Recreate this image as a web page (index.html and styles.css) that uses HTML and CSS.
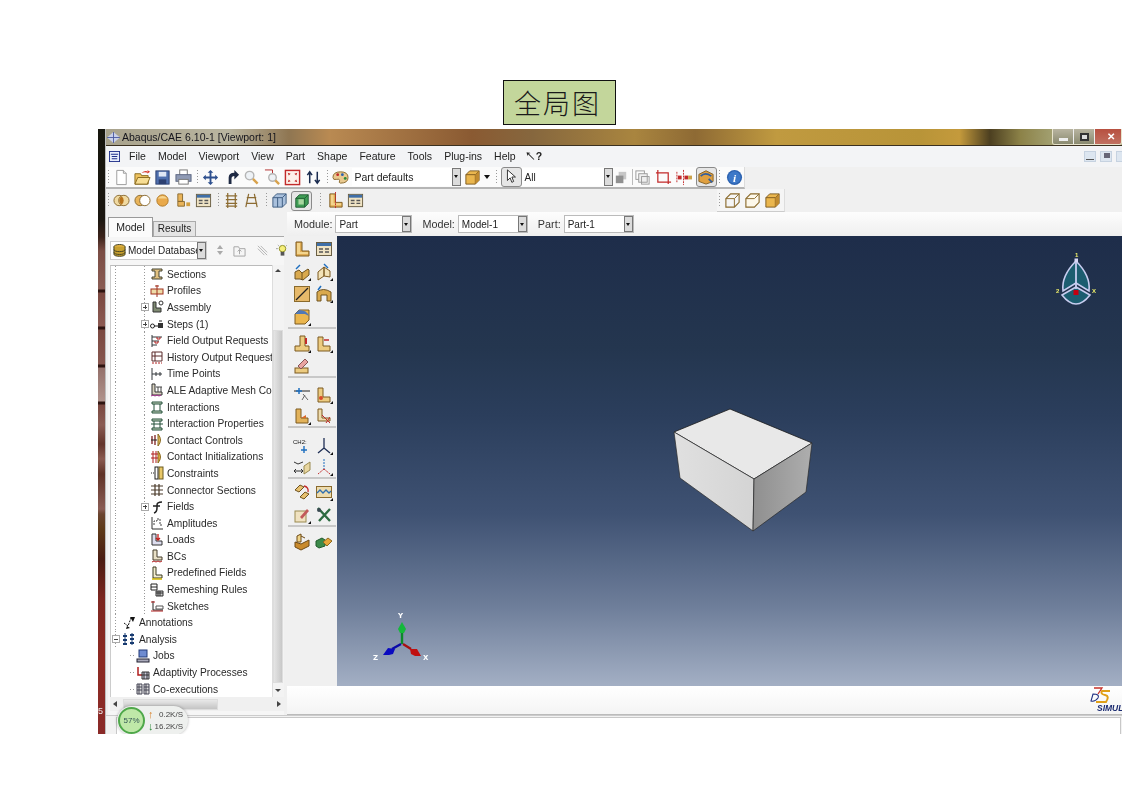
FILE: index.html
```html
<!DOCTYPE html>
<html lang="zh">
<head>
<meta charset="utf-8">
<title>全局图</title>
<link rel="stylesheet" href="styles.css">
</head>
<body>
<svg class="defs" width="0" height="0" aria-hidden="true">
  <symbol id="lshape" viewBox="0 0 18 18"><path d="M3 2h6v9h7v5H3z" fill="#e0ad55" stroke="#7d5a20"/><path d="M4 3h3v9h8v2H4z" fill="#f3d58e"/></symbol>
  <symbol id="win" viewBox="0 0 18 18"><rect x="1.500" y="2.500" width="15" height="13" fill="#efe3c4" stroke="#6a5f44"/><rect x="2" y="3" width="14" height="3" fill="#3f6fa8"/><path d="M4 9h4M10 9h4M4 12h4M10 12h4" stroke="#555" stroke-width="1.500"/></symbol>
  <symbol id="cube" viewBox="0 0 18 18"><path d="M2 6l4-4h10v10l-4 4H2z" fill="#eab64e" stroke="#7d5a20"/><path d="M2 6h10v10M12 6l4-4" fill="none" stroke="#7d5a20"/><path d="M12 6l4-4v10l-4 4z" fill="#c08a2e"/></symbol>
  <symbol id="cubeo" viewBox="0 0 18 18"><path d="M2 7l5-5h9v9l-5 5H2z" fill="none" stroke="#8a6a2c" stroke-width="1.200"/><path d="M2 7h9v9M11 7l5-5" fill="none" stroke="#8a6a2c"/></symbol>
  <symbol id="cubew" viewBox="0 0 18 18"><path d="M2 7l5-5h9v9l-5 5H2z" fill="#fdf8ea" stroke="#8a6a2c" stroke-width="1.200"/><path d="M2 7h9l5-5" fill="none" stroke="#8a6a2c"/></symbol>
  <symbol id="wedge" viewBox="0 0 18 18"><path d="M2 9l4-2 3 3 6-4 1 1v5l-6 5-3-1-5 0z" fill="#d9a94e" stroke="#6e521f"/><path d="M9 10v7" stroke="#6e521f" fill="none"/><path d="M3 6l4-4" stroke="#1f6fbf" stroke-width="1.500"/></symbol>
  <symbol id="frame" viewBox="0 0 14 14"><path d="M2 2h10v2H2zM4 4v7M10 4v7M2 11h10v2H2z" fill="#c9d7c2" stroke="#24513a"/></symbol>
  <symbol id="lsm" viewBox="0 0 14 14"><path d="M3 1h4v7h5v3H3z" fill="#e9e0c6" stroke="#443d2b"/><path d="M2 13l2-1 2 1 2-1 2 1 2-1" fill="none" stroke="#b01e1e"/></symbol>
  <symbol id="bars" viewBox="0 0 14 14"><path d="M2 1v12M2 3h10M2 7h7M2 11h5" stroke="#33363b" fill="none"/><path d="M7 3v2h3V3M5 7v2h3V7" stroke="#b01e1e" fill="none"/></symbol>
  <symbol id="fly" viewBox="0 0 18 18"><path d="M18 18h-3l3-3z" fill="#111"/></symbol>
</svg>

<div class="page">
  <h1 class="tag">全局图</h1>

  <div class="window">
    <div class="strip"><span class="strip-digit">5</span></div>
    <div class="app">

      <div class="titlebar">
        <svg class="ti" viewBox="0 0 14 12"><path d="M0 6l7-6 7 6-7 6z" fill="#c9d0ea"/><path d="M0 6h14M7 0v12" stroke="#4a5aa0"/></svg>
        <span class="title-text">Abaqus/CAE 6.10-1 [Viewport: 1]</span>
        <div class="caption">
          <span class="cap"><i class="cap-min"></i></span>
          <span class="cap"><i class="cap-max"></i></span>
          <span class="cap cap-close">✕</span>
        </div>
      </div>

      <div class="menubar">
        <svg class="mi" viewBox="0 0 12 12"><rect x=".5" y=".5" width="11" height="11" fill="#e8eefc" stroke="#1f2f8a"/><path d="M2 3.500h8M3 6h6M3 8.500h6" stroke="#1f2f8a" stroke-width="1.200"/></svg>
        <nav class="menu">
          <span>File</span><span>Model</span><span>Viewport</span><span>View</span><span>Part</span><span>Shape</span><span>Feature</span><span>Tools</span><span>Plug-ins</span><span>Help</span><span class="q">↖?</span>
        </nav>
        <div class="mdi">
          <i class="mdi-btn"><b class="m1"></b></i><i class="mdi-btn"><b class="m2"></b></i><i class="mdi-btn"></i>
        </div>
      </div>

      <div class="toolbar tb1">
        <span class="grip"></span>
        <svg class="ic" viewBox="0 0 18 18"><path d="M4 1.500h7l3 3v12H4z" fill="#fff" stroke="#9a9a9a"/><path d="M11 1.500v3h3" fill="#eee" stroke="#9a9a9a"/></svg>
        <svg class="ic" viewBox="0 0 18 18"><path d="M1 5h6l1 2h7v9H1z" fill="#eec25e" stroke="#8a6a20"/><path d="M1 16l3-7h13l-3 7z" fill="#f7dd94" stroke="#8a6a20"/><path d="M8 4q4-3 7-1l-1-2 3 2-3 2 .5-1q-3-1-6 0" fill="#d8362a"/></svg>
        <svg class="ic" viewBox="0 0 18 18"><rect x="2" y="2" width="14" height="14" fill="#4f6fae" stroke="#2c3f70"/><rect x="5" y="3" width="8" height="5" fill="#dfe7f5"/><rect x="5" y="11" width="8" height="5" fill="#2c3f70"/></svg>
        <svg class="ic" viewBox="0 0 18 18"><rect x="5" y="1" width="8" height="6" fill="#fff" stroke="#777"/><rect x="1" y="6" width="16" height="7" fill="#8f9ab4" stroke="#5a6480"/><rect x="4" y="11" width="10" height="5" fill="#fff" stroke="#777"/></svg>
        <span class="grip"></span>
        <svg class="ic" viewBox="0 0 18 18"><path d="M9 1l3 3h-2v4h4V6l3 3-3 3v-2h-4v4h2l-3 3-3-3h2v-4H4v2L1 9l3-3v2h4V4H6z" fill="#2d4f8e"/></svg>
        <svg class="ic" viewBox="0 0 18 18"><path d="M6 16V9q0-5 6-5V1l5 5-5 5V7.500q-3 0-3 3V16z" fill="#1f2a44"/></svg>
        <svg class="ic" viewBox="0 0 18 18"><circle cx="7" cy="7" r="4.500" fill="#eef2f6" stroke="#b5b5b5" stroke-width="1.500"/><path d="M10.500 10.500l5 5" stroke="#d8a24c" stroke-width="2.500"/></svg>
        <svg class="ic" viewBox="0 0 18 18"><path d="M1 1h8v4" fill="none" stroke="#b02a2a"/><circle cx="9" cy="9" r="4" fill="#eef2f6" stroke="#b5b5b5" stroke-width="1.500"/><path d="M12 12l4 4" stroke="#d8a24c" stroke-width="2.500"/></svg>
        <svg class="ic" viewBox="0 0 18 18"><rect x="1.500" y="1.500" width="15" height="15" fill="#fdf1ea" stroke="#c22a2a" stroke-width="1.500"/><path d="M4 4l3 1-2 2zM14 4l-3 1 2 2zM4 14l3-1-2-2zM14 14l-3-1 2-2z" fill="#c22a2a"/></svg>
        <svg class="ic" viewBox="0 0 18 18"><path d="M5 15V4M2.500 6.500L5 3l2.500 3.500M13 3v11M10.500 11.500L13 15l2.500-3.500" fill="none" stroke="#1b2c50" stroke-width="1.600"/></svg>
        <span class="grip"></span>
        <svg class="ic" viewBox="0 0 18 18"><path d="M1 9q0-6 8-6t8 6q0 6-8 6-2 0-1-3 0-2-3-1-4 1-4-2z" fill="#e9c98f" stroke="#8a6a30"/><circle cx="6" cy="6" r="1.500" fill="#c22a2a"/><circle cx="11" cy="6" r="1.500" fill="#2c62b0"/><circle cx="14" cy="10" r="1.500" fill="#2c8a3a"/></svg>
        <span class="combo c-defaults"><span>Part defaults</span><i class="arrow"></i></span>
        <svg class="ic ic-cube" viewBox="0 0 18 18"><use href="#cube"/></svg>
        <i class="drop"></i>
        <span class="grip"></span>
        <span class="pressed"><svg class="ic" viewBox="0 0 18 18"><path d="M5 1v12l3-3 2 5 2-1-2-5h4z" fill="#fff" stroke="#222"/></svg></span>
        <span class="combo c-all"><span>All</span><i class="arrow"></i></span>
        <svg class="ic dim" viewBox="0 0 18 18"><rect x="6" y="3" width="8" height="8" fill="#bbb"/><rect x="3" y="7" width="8" height="8" fill="#777"/></svg>
        <span class="sep"></span>
        <svg class="ic faint" viewBox="0 0 18 18"><rect x="2" y="2" width="9" height="9" fill="none" stroke="#888"/><rect x="5" y="5" width="9" height="9" fill="#eee" stroke="#888"/><rect x="8" y="8" width="8" height="8" fill="none" stroke="#888"/></svg>
        <svg class="ic" viewBox="0 0 18 18"><path d="M3 1v13h14M1 4h13v12" fill="none" stroke="#c22a2a" stroke-width="1.300"/></svg>
        <svg class="ic" viewBox="0 0 18 18"><path d="M2 3v12M9 1v16" stroke="#c22a2a" stroke-dasharray="2 1"/><rect x="3" y="7" width="4" height="4" fill="#c22a2a"/><rect x="10" y="7" width="4" height="4" fill="#c22a2a"/><rect x="14" y="7" width="4" height="4" fill="#caa24a"/></svg>
        <span class="pressed"><svg class="ic" viewBox="0 0 18 18"><path d="M1 6l8-4 8 4v8l-8 3-8-3z" fill="#e0a040" stroke="#7d5a20"/><path d="M3 8q5-5 12 0" stroke="#335f9e" fill="none" stroke-width="2"/><path d="M12 11l4 4" stroke="#335f9e" stroke-width="2"/></svg></span>
        <span class="grip"></span>
        <svg class="ic ic-info" viewBox="0 0 18 18"><circle cx="9" cy="9" r="8" fill="#2c62b0"/><circle cx="9" cy="9" r="6.500" fill="#3d78c8"/><text class="info" x="9" y="14" text-anchor="middle">i</text></svg>
      </div>

      <div class="toolbar tb2">
        <span class="grip"></span>
        <svg class="ic" viewBox="0 0 18 18"><circle cx="6.500" cy="9" r="5.500" fill="#f0d9a0" stroke="#8a6a30"/><circle cx="11.500" cy="9" r="5.500" fill="#f0d9a0" stroke="#8a6a30"/><path d="M9 4.500a5.500 5.500 0 010 9 5.500 5.500 0 010-9" fill="#b8741c"/></svg>
        <svg class="ic" viewBox="0 0 18 18"><circle cx="6.500" cy="9" r="5.500" fill="#e9b45a" stroke="#8a6a30"/><circle cx="11.500" cy="9" r="5.500" fill="#fff" stroke="#8a6a30"/></svg>
        <svg class="ic" viewBox="0 0 18 18"><circle cx="9" cy="9" r="6" fill="#e9a94a" stroke="#b07a28"/><path d="M4 7a6 6 0 0110 0" fill="#f6d48e"/></svg>
        <svg class="ic" viewBox="0 0 18 18"><path d="M3 2h5v8h-5zM3 10h7v5H3z" fill="#e9b45a" stroke="#8a6a30"/><rect x="12" y="11" width="4" height="4" fill="#d3a040"/></svg>
        <svg class="ic" viewBox="0 0 18 18"><use href="#win"/></svg>
        <span class="grip g-mid"></span>
        <svg class="ic" viewBox="0 0 18 18"><path d="M5 1v16M13 1v16M3 4h12M3 8h12M3 12h12M3 15h12" stroke="#8c6c33" stroke-width="1.300"/></svg>
        <svg class="ic" viewBox="0 0 18 18"><path d="M6 2L3 16M12 2l3 14M4 6h10M3 12h12" stroke="#8c6c33" stroke-width="1.300" fill="none"/></svg>
        <span class="grip g-mid"></span>
        <svg class="ic" viewBox="0 0 18 18"><path d="M2 6l4-4h10v10l-4 4H2z" fill="#a9c0dc" stroke="#3b5a80"/><path d="M2 6h10v10M12 6l4-4M7 6v10" fill="none" stroke="#3b5a80"/></svg>
        <span class="pressed"><svg class="ic" viewBox="0 0 18 18"><path d="M2 6l4-4h10v10l-4 4H2z" fill="#3f9d55" stroke="#1e5a30"/><path d="M5 7h6v6H5z" fill="#a9d7a0"/><path d="M2 6h10v10M12 6l4-4" fill="none" stroke="#1e5a30"/></svg></span>
        <span class="grip g-wide"></span>
        <svg class="ic" viewBox="0 0 18 18"><use href="#lshape"/><path d="M9 0v18" stroke="#c22a2a" stroke-dasharray="2 1"/></svg>
        <svg class="ic" viewBox="0 0 18 18"><use href="#win"/></svg>
        <div class="tb2-right">
          <span class="grip"></span>
          <svg class="ic" viewBox="0 0 18 18"><use href="#cubeo"/></svg>
          <svg class="ic" viewBox="0 0 18 18"><use href="#cubew"/></svg>
          <svg class="ic" viewBox="0 0 18 18"><use href="#cube"/></svg>
        </div>
      </div>

      <div class="main">
        <aside class="left">
          <div class="tabs">
            <span class="tab tab-on">Model</span>
            <span class="tab">Results</span>
          </div>
          <div class="panel">
            <div class="dbrow">
              <span class="combo c-db">
                <svg class="ic-s" viewBox="0 0 14 14"><ellipse cx="7" cy="3" rx="6" ry="2.500" fill="#e0b040" stroke="#3c3c20"/><path d="M1 3v8c0 3 12 3 12 0V3" fill="#c8a030" stroke="#3c3c20"/><path d="M1 6c0 3 12 3 12 0M1 9c0 3 12 3 12 0" fill="none" stroke="#3c3c20"/></svg>
                <span class="clip">Model Database</span><i class="arrow"></i>
              </span>
              <span class="updown">
                <i class="up"></i><i class="down"></i>
              </span>
              <svg class="ic-s dimmer" viewBox="0 0 14 14"><path d="M1 3h5l1 2h6v8H1z" fill="none" stroke="#999"/><path d="M7 6v5M5 8l2-2 2 2" fill="none" stroke="#999"/></svg>
              <svg class="ic-s dimmer" viewBox="0 0 14 14"><path d="M2 2l10 10M5 2l7 7M2 5l7 7" stroke="#aaa" fill="none"/></svg>
              <svg class="ic-s" viewBox="0 0 14 14"><circle cx="7" cy="5" r="3.500" fill="#f6ef7a" stroke="#8a8a20"/><rect x="5" y="8.500" width="4" height="4" fill="#555"/><path d="M0 5h2M12 5h2M2 1l1 1M12 1l-1 1" stroke="#999"/></svg>
            </div>

            <div class="treewrap">
              <div class="tree">
                <div class="row l2"><svg class="ti2" viewBox="0 0 14 14"><path d="M2 2h10v2H9v6h3v2H2v-2h3V4H2z" fill="#e0c080" stroke="#443"/></svg><span>Sections</span></div>
                <div class="row l2"><svg class="ti2" viewBox="0 0 14 14"><rect x="1" y="5" width="12" height="5" fill="#eedca8" stroke="#a0301e"/><path d="M7 1v12M5 2h4" stroke="#a0301e"/></svg><span>Profiles</span></div>
                <div class="row l2"><i class="exp plus"></i><svg class="ti2" viewBox="0 0 14 14"><path d="M3 2h3v6h5v4H3z" fill="#7f8a72" stroke="#333"/><circle cx="11" cy="3" r="2" fill="#fff" stroke="#333"/></svg><span>Assembly</span></div>
                <div class="row l2"><i class="exp plus"></i><svg class="ti2" viewBox="0 0 14 14"><circle cx="2.500" cy="9" r="2" fill="#fff" stroke="#222"/><path d="M4 9h4" stroke="#222"/><rect x="8" y="6" width="5" height="5" fill="#333"/><path d="M9 4h3" stroke="#222"/></svg><span>Steps (1)</span></div>
                <div class="row l2"><svg class="ti2" viewBox="0 0 14 14"><use href="#bars"/></svg><span>Field Output Requests</span></div>
                <div class="row l2"><svg class="ti2" viewBox="0 0 14 14"><path d="M2 2h10v9H2zM5 2v9M2 6h10" fill="none" stroke="#5a2a2a"/><path d="M2 13h10" stroke="#b01e1e" stroke-dasharray="2 1"/></svg><span>History Output Requests</span></div>
                <div class="row l2"><svg class="ti2" viewBox="0 0 14 14"><path d="M2 1v12M2 7h10M6 5v4M10 5v4" fill="none" stroke="#33363b"/></svg><span>Time Points</span></div>
                <div class="row l2"><svg class="ti2" viewBox="0 0 14 14"><path d="M2 1h3v8h7v3H2z" fill="#d8d2c0" stroke="#333"/><path d="M6 4h6M8 4v5M11 4v5" stroke="#444"/><path d="M1 13l2-1 2 1 2-1 2 1 2-1" fill="none" stroke="#a02a8a"/></svg><span>ALE Adaptive Mesh Controls</span></div>
                <div class="row l2"><svg class="ti2" viewBox="0 0 14 14"><use href="#frame"/></svg><span>Interactions</span></div>
                <div class="row l2"><svg class="ti2" viewBox="0 0 14 14"><use href="#frame"/><path d="M1 7h12" stroke="#24513a"/></svg><span>Interaction Properties</span></div>
                <div class="row l2"><svg class="ti2" viewBox="0 0 14 14"><path d="M8 1q5 6 0 12z" fill="#e8c060" stroke="#8a6a20"/><path d="M2 3v8M5 2v10" stroke="#7c2020" stroke-width="1.300"/><path d="M1 7h6" stroke="#222"/></svg><span>Contact Controls</span></div>
                <div class="row l2"><svg class="ti2" viewBox="0 0 14 14"><path d="M8 1q5 6 0 12z" fill="#e8b040" stroke="#8a6a20"/><path d="M1 4h7M1 8h7M3 1v12M6 1v12" stroke="#b01e1e"/></svg><span>Contact Initializations</span></div>
                <div class="row l2"><svg class="ti2" viewBox="0 0 14 14"><rect x="5" y="1" width="3" height="12" fill="#fff" stroke="#222"/><rect x="9" y="1" width="4" height="12" fill="#e9c868" stroke="#6a5a20"/><path d="M1 7h3" stroke="#222" stroke-dasharray="1 1"/></svg><span>Constraints</span></div>
                <div class="row l2"><svg class="ti2" viewBox="0 0 14 14"><path d="M5 1v12M9 1v12M1 3h12M1 7h12M1 11h12" stroke="#4a3a2a" stroke-width="1.200"/></svg><span>Connector Sections</span></div>
                <div class="row l2"><i class="exp plus"></i><svg class="ti2" viewBox="0 0 14 14"><path d="M4 13q3-1 3-5V5q0-3 5-3M3 6h7" fill="none" stroke="#222" stroke-width="1.500"/></svg><span>Fields</span></div>
                <div class="row l2"><svg class="ti2" viewBox="0 0 14 14"><path d="M2 1v12h11" fill="none" stroke="#333"/><path d="M4 9V5h3V3h3v6h2" fill="none" stroke="#444" stroke-dasharray="2 1"/></svg><span>Amplitudes</span></div>
                <div class="row l2"><svg class="ti2" viewBox="0 0 14 14"><path d="M2 1h4v7h6v4H2z" fill="#dde" stroke="#333"/><path d="M8 1v6M6 5l2 2 2-2" fill="none" stroke="#c21e1e" stroke-width="1.300"/></svg><span>Loads</span></div>
                <div class="row l2"><svg class="ti2" viewBox="0 0 14 14"><use href="#lsm"/></svg><span>BCs</span></div>
                <div class="row l2"><svg class="ti2" viewBox="0 0 14 14"><path d="M3 1h3v8h6v3H3z" fill="#f1ecd0" stroke="#3a3a20"/><path d="M2 13h10" stroke="#d2b800" stroke-width="1.500"/></svg><span>Predefined Fields</span></div>
                <div class="row l2"><svg class="ti2" viewBox="0 0 14 14"><path d="M1 1h6v6H1zM1 4h6" fill="#fff" stroke="#222"/><path d="M6 8h7v5H6zM8 8v5M10 8v5M6 10h7" fill="#ccc" stroke="#333"/></svg><span>Remeshing Rules</span></div>
                <div class="row l2"><svg class="ti2" viewBox="0 0 14 14"><path d="M3 2v9h10" fill="none" stroke="#222"/><path d="M1 3h4M1 12h12" stroke="#b01e1e"/><path d="M6 7h7v3H6z" fill="#fff" stroke="#555"/></svg><span>Sketches</span></div>
                <div class="row l1"><svg class="ti2" viewBox="0 0 14 14"><path d="M2 7l4 3 3-8" fill="none" stroke="#111" stroke-dasharray="2 1"/><path d="M8 1l5 0-2 5zM5 10l3 2-4 1z" fill="#111"/></svg><span>Annotations</span></div>
                <div class="row l1 top-expander"><i class="exp minus"></i><svg class="ti2" viewBox="0 0 14 14"><path d="M3 1v12M10 1v12" stroke="#173a70" stroke-width="1"/><path d="M1 3h4v2H1zM1 7h4v2H1zM1 11h4v2H1zM8 2h4v2H8zM8 6h4v2H8zM8 10h4v2H8z" fill="#173a70"/></svg><span>Analysis</span></div>
                <div class="row l15"><svg class="ti2" viewBox="0 0 14 14"><rect x="3" y="1" width="8" height="7" fill="#6e8bd0" stroke="#223a78"/><rect x="1" y="10" width="12" height="3" fill="#aab" stroke="#223"/></svg><span>Jobs</span></div>
                <div class="row l15"><svg class="ti2" viewBox="0 0 14 14"><path d="M2 1v8h5" fill="none" stroke="#b01e1e" stroke-width="1.500"/><path d="M6 6h7v7H6zM8 6v7M11 6v7M6 9h7" fill="#ccd" stroke="#333"/></svg><span>Adaptivity Processes</span></div>
                <div class="row l15"><svg class="ti2" viewBox="0 0 14 14"><path d="M1 2h5v10H1zM8 2h5v10H8zM1 5h5M1 8h5M8 5h5M8 8h5M3 2v10M10 2v10" fill="#ddd" stroke="#445"/></svg><span>Co-executions</span></div>
              </div>
              <div class="vscroll">
                <i class="sb-up"></i>
                <div class="sb-track"><span class="sb-thumb"></span></div>
                <i class="sb-down"></i>
              </div>
            </div>
            <div class="hscroll">
              <i class="sb-left"></i>
              <div class="hs-track"><span class="hs-thumb"></span></div>
              <i class="sb-right"></i>
            </div>
          </div>
        </aside>

        <section class="right">
          <div class="modrow">
            <label class="lab">Module:</label><span class="combo c-mod"><span>Part</span><i class="arrow"></i></span>
            <label class="lab l-model">Model:</label><span class="combo c-model"><span>Model-1</span><i class="arrow"></i></span>
            <label class="lab l-part">Part:</label><span class="combo c-part"><span>Part-1</span><i class="arrow"></i></span>
          </div>
          <div class="work">
            <div class="toolbox">
              <div class="tgroup">
                <svg class="tbi" viewBox="0 0 18 18"><use href="#lshape"/></svg>
                <svg class="tbi" viewBox="0 0 18 18"><use href="#win"/></svg>
                <svg class="tbi" viewBox="0 0 18 18"><use href="#wedge"/><use href="#fly"/></svg>
                <svg class="tbi" viewBox="0 0 18 18"><path d="M3 9l6-5v9l-6 4zM9 4l6 4v6l-6-1z" fill="#f3e3b8" stroke="#7d5a20"/><path d="M9 1l4 4" stroke="#1f6fbf" stroke-width="1.500"/><use href="#fly"/></svg>
                <svg class="tbi" viewBox="0 0 18 18"><rect x="1.500" y="1.500" width="15" height="15" fill="#e6b96a" stroke="#8a6a2c"/><path d="M3 15L15 3" stroke="#222" stroke-width="1.300"/></svg>
                <svg class="tbi" viewBox="0 0 18 18"><path d="M2 7q6-5 14 0v9h-4V10H6v6H2z" fill="#d9a94e" stroke="#6e521f"/><path d="M3 5l3-4" stroke="#1f6fbf" stroke-width="1.500"/><use href="#fly"/></svg>
                <svg class="tbi" viewBox="0 0 18 18"><path d="M2 6l4-4h10v10l-4 4H2z" fill="#eab64e" stroke="#7d5a20"/><path d="M6 2q8 0 10 6l-4-2H2z" fill="#4f78b8"/><use href="#fly"/></svg>
              </div>
              <div class="tgroup">
                <svg class="tbi" viewBox="0 0 18 18"><path d="M7 1h5v10h4v5H2v-5h5z" fill="#eccb80" stroke="#7d5a20"/><path d="M13 3v6" stroke="#c22a2a" stroke-width="2"/><use href="#fly"/></svg>
                <svg class="tbi" viewBox="0 0 18 18"><path d="M3 2h5v9h7v5H3z" fill="#eccb80" stroke="#7d5a20"/><path d="M9 5h5" stroke="#c22a2a" stroke-width="1.500"/><use href="#fly"/></svg>
                <svg class="tbi" viewBox="0 0 18 18"><rect x="2" y="11" width="13" height="5" fill="#eccb80" stroke="#7d5a20"/><path d="M5 9l7-7 3 3-7 7z" fill="#e9a3a0" stroke="#855"/></svg>
              </div>
              <div class="tgroup">
                <svg class="tbi" viewBox="0 0 18 18"><path d="M1 5h16" stroke="#222"/><path d="M6 2v6M3 5h6" stroke="#1f6fbf" stroke-width="1.500"/><path d="M10 8l5 6M12 9l-3 5" stroke="#666"/></svg>
                <svg class="tbi" viewBox="0 0 18 18"><path d="M3 2h5v9h7v5H3z" fill="#eccb80" stroke="#7d5a20"/><circle cx="6" cy="12" r="2" fill="#d94a2a"/><use href="#fly"/></svg>
                <svg class="tbi" viewBox="0 0 18 18"><path d="M3 2h5v9h7v5H3z" fill="#e2b25a" stroke="#7d5a20"/><path d="M8 11l5-3v3" fill="#d9692a"/><use href="#fly"/></svg>
                <svg class="tbi" viewBox="0 0 18 18"><path d="M3 2h4v9h8v3H3z" fill="#eedcae" stroke="#7d5a20"/><path d="M7 8l8 8M15 10l-4 6" stroke="#c22a2a"/></svg>
              </div>
              <div class="tgroup">
                <svg class="tbi" viewBox="0 0 18 18"><text class="mini" x="0" y="7">CH2:</text><path d="M11 9v7M8 13h6" stroke="#1f6fbf" stroke-width="1.400"/></svg>
                <svg class="tbi" viewBox="0 0 18 18"><path d="M9 1v10M9 11l-6 5M9 11l6 5" stroke="#1f2f55" stroke-width="1.300"/><use href="#fly"/></svg>
                <svg class="tbi" viewBox="0 0 18 18"><path d="M1 4l4 2 5-2M2 13h8M8 11l2 2-2 2M3 11l-2 2 2 2" fill="none" stroke="#333"/><path d="M11 8l6-4v8l-6 4z" fill="#e8d6a0" stroke="#9a8a50"/></svg>
                <svg class="tbi" viewBox="0 0 18 18"><path d="M9 1v10" stroke="#1f6fbf" stroke-dasharray="2 1"/><path d="M9 11l-6 5M9 11l6 5" stroke="#c22a2a" stroke-dasharray="2 1"/><use href="#fly"/></svg>
              </div>
              <div class="tgroup">
                <svg class="tbi" viewBox="0 0 18 18"><path d="M2 7l5-5 4 2-5 5zM7 14l5-5 4 2-5 5z" fill="#e6c070" stroke="#6e521f"/><path d="M11 3q5 1 4 6" fill="none" stroke="#c22a2a" stroke-width="1.300"/></svg>
                <svg class="tbi" viewBox="0 0 18 18"><rect x="1.500" y="3.500" width="15" height="11" fill="#eedcae" stroke="#8a6a2c"/><path d="M2 10l3-3 3 3 3-3 3 3 2-2" fill="none" stroke="#2f6fb0" stroke-width="1.300"/><use href="#fly"/></svg>
                <svg class="tbi" viewBox="0 0 18 18"><rect x="2" y="5" width="11" height="11" fill="#f0e2c0" stroke="#9a8a50"/><path d="M7 11l7-8 2 2-7 8z" fill="#c25a5a"/><use href="#fly"/></svg>
                <svg class="tbi" viewBox="0 0 18 18"><path d="M3 2l12 13M15 3L4 15" stroke="#2c6a40" stroke-width="2.400"/><circle cx="4" cy="4" r="2" fill="#3a4a52"/></svg>
              </div>
              <div class="tgroup last">
                <svg class="tbi" viewBox="0 0 18 18"><path d="M2 9l6 2 8-4v6l-8 4-6-3z" fill="#c98a2c" stroke="#6e4a15"/><path d="M4 9V3l4-2v8zM8 3l4 2" fill="#f0d58a" stroke="#6e4a15"/></svg>
                <svg class="tbi" viewBox="0 0 18 18"><path d="M1 8l6-3 3 2v6l-6 2-3-2z" fill="#3c8a4a" stroke="#205a2c"/><path d="M8 9l5-4 4 3-5 5z" fill="#e6a53a" stroke="#8a6a20"/></svg>
              </div>
            </div>

            <div class="viewport">
              <svg class="orient" viewBox="0 0 44 60">
                <text class="ol" x="20" y="7">1</text>
                <text class="ol" x="1" y="43">2</text>
                <text class="ol" x="37" y="43">X</text>
                <path d="M21 11C10 22 7 33 8 41l13-8 13 8C35 33 32 22 21 11z" fill="#1c5d70" stroke="#c8cdf0" stroke-width="1.600"/>
                <path d="M7 45q14 18 28 0L21 37z" fill="#1c5d70" stroke="#c8cdf0" stroke-width="1.600"/>
                <path d="M21 11v28" stroke="#c8cdf0" stroke-width="1.800"/>
                <rect x="19.500" y="8.500" width="3.500" height="3.500" fill="#d8d8f8"/>
                <rect x="18.500" y="40" width="5" height="5" fill="#c40010"/>
              </svg>
              <svg class="part3d" viewBox="0 0 140 126">
                <defs>
                  <linearGradient id="lf" x1="0" y1="0" x2="1" y2="0"><stop offset="0" stop-color="#e0e0e0"/><stop offset="1" stop-color="#d4d4d4"/></linearGradient>
                  <linearGradient id="rf" x1="0" y1="0" x2="1" y2="0"><stop offset="0" stop-color="#8f8f8f"/><stop offset="1" stop-color="#aeaeae"/></linearGradient>
                </defs>
                <path d="M1 24L57 1l82 34-58 36z" fill="#e8e8e8" stroke="#1a1a1a" stroke-width=".8"/>
                <path d="M1 24l80 47-1 52L7 70z" fill="url(#lf)" stroke="#2a2a2a" stroke-width=".7"/>
                <path d="M81 71l58-36-6 49-53 39z" fill="url(#rf)" stroke="#2a2a2a" stroke-width=".7"/>
              </svg>
              <svg class="triad" viewBox="0 0 70 56">
                <text class="tl" x="32" y="8">Y</text>
                <text class="tl" x="7" y="50">Z</text>
                <text class="tl" x="57" y="50">X</text>
                <path d="M36 34V20" stroke="#0a8a2a" stroke-width="2.400"/>
                <path d="M36 12l4 7-2 4h-4l-2-4z" fill="#14b83a"/>
                <path d="M35 34l-9 5" stroke="#0a0aa8" stroke-width="2.400"/>
                <path d="M17 45l5-7 7 1-2 5-4 1z" fill="#0a0ac0"/>
                <path d="M37 34l8 5" stroke="#a81010" stroke-width="2.400"/>
                <path d="M55 46l-4-7-7 0 1 5 4 2z" fill="#c01010"/>
              </svg>
            </div>
          </div>
          <div class="msgbar">
            <div class="logo">
              <svg class="ds" viewBox="0 0 24 18"><path d="M4 1h8l-4 6" fill="none" stroke="#c8322a" stroke-width="1.300"/><path d="M20 4h-8q-2 3 3 4t1 7H6" fill="none" stroke="#e0a018" stroke-width="2"/><path d="M3 7q7 0 5 4-3 4-7 3z" fill="none" stroke="#203080" stroke-width="1.100"/></svg>
              <span class="simu">SIMULIA</span>
            </div>
          </div>
        </section>
      </div>

      <div class="cmdrow"><div class="cmd"></div></div>
    </div>

    <div class="netwidget">
      <span class="ring">57%</span>
      <div class="speeds">
        <span><b class="upa">↑</b>0.2K/S</span>
        <span><b class="dna">↓</b>16.2K/S</span>
      </div>
    </div>
  </div>
</div>
</body>
</html>
```

FILE: styles.css
```css
* { box-sizing: border-box; }
html, body { margin: 0; padding: 0; background: #fff; overflow: hidden; }
body { width: 1122px; height: 793px; font-family: "Liberation Sans", Arial, sans-serif; }
.defs { position: absolute; }

.page { display: flex; flex-direction: column; padding-top: 80px; }
.tag {
  margin: 0 0 4px 503px;
  width: 113px; height: 45px;
  padding-right: 4px;
  background: #c3d69b;
  border: 1px solid #111;
  font: 300 27px/44px "Noto Sans CJK SC", "Noto Sans CJK JP", serif;
  text-align: center;
  color: #1a1a1a;
  letter-spacing: 2px;
}

.window {
  position: relative;
  width: 1024px; height: 605px;
  margin-left: 98px;
  display: flex;
  overflow: hidden;
  font-size: 10px;
  color: #222;
  filter: blur(.35px);
}
.strip {
  width: 7px; flex: none;
  position: relative;
  background: linear-gradient(180deg,
    #17160e 0, #1a1610 90px, #3a221a 108px, #7a4c44 122px,
    #8a5c54 160px, #2e1410 161px, #2e1410 163px,
    #7a4840 164px, #8c5a52 197px, #2e1410 198px, #2e1410 200px,
    #7a4840 201px, #87564e 235px, #2e1410 236px, #2e1410 238px,
    #94706a 239px, #b0938c 272px, #2e1410 273px, #2e1410 275px,
    #7a4840 276px, #8a5c54 296px, #64352c 315px, #8a5a50 330px, #5f3226 345px,
    #8a5c54 380px, #6a4430 385px, #5e3a18 400px, #4a1c12 430px,
    #7c2620 470px, #8c2a22 530px, #8a2a28 605px);
}
.strip-digit { position: absolute; left: 0; top: 577px; font-size: 9px; color: #eee; line-height: 10px; }
.app { flex: 1; min-width: 0; display: flex; flex-direction: column; background: #f0f0f0; border-left: 1px solid #bdbdbd; }

/* title */
.titlebar {
  height: 17px; flex: none;
  display: flex; align-items: center;
  padding-left: 1px;
  border-bottom: 1px solid #3a3020;
  background: linear-gradient(90deg, #a8a28c 0, #b9b5a0 12%, #8f7652 18%, #b98a52 22%, #8a5a32 36%, #86673e 42%, #a9853f 52%, #8e6a34 58%, #c09a40 66%, #b89438 80%, #c49a3c 84%, #4c3f20 87%, #8c8248 90%, #a8a87c 94%, #b0aa88 100%);
}
.ti { width: 13px; height: 11px; margin-right: 2px; }
.title-text { font-size: 10.500px; color: #14141c; }
.caption { margin-left: auto; display: flex; height: 16px; border: 1px solid #e8e4cc; border-top: 0; border-radius: 0 0 3px 3px; width: 70px; overflow: hidden; }
.cap { flex: 1; display: flex; align-items: center; justify-content: center; background: linear-gradient(#b8b4a0, #8a8a70); border-right: 1px solid #eee; }
.cap-min { width: 9px; height: 3px; background: #eee; margin-top: 5px; }
.cap-max { width: 9px; height: 8px; border: 2px solid #333; background: #ddd; }
.cap-close { background: linear-gradient(#b85040, #c07060); color: #fff; font-size: 10px; font-weight: 700; border: 0; padding-left: 6px; }

/* menu */
.menubar { height: 21px; flex: none; display: flex; align-items: center; background: #f3f4f6; padding-left: 3px; }
.mi { width: 11px; height: 11px; margin-right: 9px; flex: none; }
.menu { display: flex; gap: 12px; font-size: 10.500px; color: #222; }
.q { font-weight: 700; margin-left: -3px; }
.mdi { margin-left: auto; display: flex; gap: 4px; margin-right: -6px; }
.mdi-btn { display: block; width: 12px; height: 11px; background: #dde6f0; border: 1px solid #c6d2e0; }
.m1 { display: block; width: 8px; height: 1px; background: #555; margin: 7px 1px 0; }
.m2 { display: block; width: 6px; height: 5px; background: #667; margin: 1px 0 0 3px; }

/* toolbars */
.toolbar { flex: none; display: flex; align-items: center; position: relative; }
.tb1 { height: 22px; background: #fbfbfb; width: 639px; border-bottom: 2px solid #b5b5b5; border-right: 1px solid #dcdcdc; }
.tb2 { height: 23px; background: #f0f0f0; }
.tb2-right { position: absolute; left: 611px; top: 0; height: 23px; width: 68px; display: flex; align-items: center; background: #f5f5f5; border-right: 1px solid #ddd; border-bottom: 1px solid #ccc; }
.tb2-right .ic { margin-right: 3px; width: 17px; }
.ic { width: 17px; height: 17px; flex: none; margin-right: 3.500px; }
.ic-cube { margin-right: 3px; }
.dim { opacity: .8; margin-right: 2px; }
.faint { opacity: .85; }
.ic-info { margin-left: 2px; margin-right: 0; }
.grip { width: 4px; height: 15px; flex: none; margin: 0 2px 0 1px; background: repeating-linear-gradient(180deg, #999 0 1px, transparent 1px 3px) 1px 0 / 1px 100% no-repeat; }
.g-mid { margin: 0 2px 0 1px; }
.g-wide { margin: 0 3.500px 0 7px; }
.sep { width: 1px; height: 16px; background: #bbb; margin: 0 1.500px 0 0; flex: none; }
.pressed { flex: none; display: inline-flex; align-items: center; justify-content: center; width: 21px; height: 20px; border: 1px solid #8a8a8a; border-radius: 3px; background: #e6e6e6; }
.pressed .ic { margin: 0; width: 16px; height: 16px; }
.info { font: italic 700 12px "Liberation Serif", serif; fill: #fff; }

.combo { flex: none; display: inline-flex; align-items: center; position: relative; height: 18px; background: #fff; border: 1px solid #c8c8c8; border-left-color: #bbb; padding-left: 3px; font-size: 10px; color: #222; }
.arrow { position: absolute; right: 0; top: 0; bottom: 0; width: 9px; background: #dcdcdc; border: 1px solid #777; }
.arrow::after { content: ""; position: absolute; left: 1px; top: 6px; border: 2.500px solid transparent; border-top: 3px solid #111; }
.c-defaults { width: 109px; margin: 0 3px 0 -1px; border: 0; font-size: 10.500px; }
.c-all { width: 91px; margin: 0; border: 0; }
.drop { width: 0; height: 0; border: 3px solid transparent; border-top: 4px solid #111; margin: 3px 4px 0 0; flex: none; }

/* main */
.main { flex: 1; min-height: 0; display: flex; }
.left { width: 181px; flex: none; display: flex; flex-direction: column; background: #f0f0f0; }
.tabs { height: 24px; flex: none; display: flex; align-items: flex-end; padding: 0 0 0 2px; }
.tab { height: 15px; width: 43px; text-align: center; font-size: 10px; line-height: 14px; border: 1px solid #aaa; border-bottom: 0; background: #e4e4e4; }
.tab-on { height: 20px; width: 45px; line-height: 19px; background: #fbfbfb; font-size: 10.500px; margin-bottom: -1px; position: relative; border-color: #999; }
.panel { flex: 1; min-height: 0; margin: 0 3px 0 2px; display: flex; flex-direction: column; background: #f6f6f6; border-top: 1px solid #aaa; }
.dbrow { height: 28px; flex: none; display: flex; align-items: center; gap: 7px; padding: 0 0 2px 2px; }
.c-db { width: 97px; height: 19px; padding-left: 2px; font-size: 10px; border-color: #ccc; }
.clip { overflow: hidden; white-space: nowrap; width: 79px; margin-left: 2px; }
.ic-s { width: 13px; height: 13px; flex: none; }
.dimmer { opacity: .9; margin-left: 3px; }
.updown { display: flex; flex-direction: column; gap: 2px; width: 8px; margin-left: 3px; }
.up { border: 3.500px solid transparent; border-top: 0; border-bottom: 4px solid #aaa; }
.down { border: 3.500px solid transparent; border-bottom: 0; border-top: 4px solid #aaa; }
.treewrap { flex: 1; min-height: 0; display: flex; overflow: hidden; padding-left: 2px; }
.tree { width: 162px; flex: none; background: #fff; overflow: hidden; border-left: 1px solid #ccc; border-top: 1px solid #bbb; }
.row { height: 16.600px; display: flex; align-items: center; white-space: nowrap; font-size: 10.200px; color: #2a2a2a; position: relative; }
.ti2 { width: 14px; height: 14px; flex: none; margin-right: 3px; }
.l2 { padding-left: 39px; background: repeating-linear-gradient(180deg, #999 0 1px, transparent 1px 3px) 33px 0 / 1px 100% no-repeat, repeating-linear-gradient(180deg, #999 0 1px, transparent 1px 3px) 4px 0 / 1px 100% no-repeat; }
.l1 { padding-left: 11px; background: repeating-linear-gradient(180deg, #999 0 1px, transparent 1px 3px) 4px 0 / 1px 100% no-repeat; }
.l15 { padding-left: 25px; background: repeating-linear-gradient(90deg, #999 0 1px, transparent 1px 3px) 19px 50% / 5px 1px no-repeat; }
.exp { position: absolute; width: 8px; height: 8px; border: 1px solid #aaa; background: #fff; }
.plus { left: 30px; }
.minus { left: 1px; }
.exp::before { content: ""; position: absolute; left: 1px; right: 1px; top: 2.500px; height: 1px; background: #444; }
.plus::after { content: ""; position: absolute; top: 1px; bottom: 1px; left: 2.500px; width: 1px; background: #444; }

.vscroll { width: 12px; flex: none; display: flex; flex-direction: column; background: #f3f3f3; border-left: 1px solid #ddd; }
.sb-up, .sb-down { height: 12px; position: relative; flex: none; }
.sb-up::after { content: ""; position: absolute; left: 2px; top: 4px; border: 3px solid transparent; border-top: 0; border-bottom: 3px solid #444; }
.sb-down::after { content: ""; position: absolute; left: 2px; top: 4px; border: 3px solid transparent; border-bottom: 0; border-top: 3px solid #444; }
.sb-track { flex: 1; padding-top: 53px; padding-bottom: 2px; display: flex; }
.sb-thumb { display: block; width: 10px; background: linear-gradient(90deg, #e4e4e4, #c8c8c8); margin-left: 0; border: 1px solid #ddd; flex: none; }
.hscroll { height: 14px; flex: none; display: flex; align-items: center; background: #f0f0f0; margin: 0 0 4px 2px; }
.sb-left, .sb-right { flex: none; width: 0; height: 0; border: 3px solid transparent; margin: 0 3px; }
.sb-left { border-right: 4px solid #444; border-left: 0; }
.sb-right { border-left: 4px solid #444; border-right: 0; margin-left: auto; }
.hs-track { width: 150px; }
.hs-thumb { display: block; height: 11px; width: 95px; background: linear-gradient(#e8e8e8, #c4c4c4); border: 1px solid #ddd; margin-left: 3px; }

.right { flex: 1; min-width: 0; display: flex; flex-direction: column; }
.modrow { height: 24px; flex: none; display: flex; align-items: center; background: linear-gradient(#fdfdfd, #efefef); padding: 0 0 0 7px; font-size: 10.800px; }
.lab { flex: none; margin-right: 3px; color: #333; }
.l-model { margin-left: 10px; }
.l-part { margin-left: 10px; }
.modrow .combo { border-color: #bbb; }
.c-mod { width: 77px; }
.c-model { width: 70px; }
.c-part { width: 70px; }
.work { flex: 1; min-height: 0; display: flex; }
.toolbox { width: 50px; flex: none; display: flex; flex-direction: column; background: #f0f0f0; padding: 4px 1px 0 1px; }
.tgroup { display: grid; grid-template-columns: 18px 18px; column-gap: 4px; row-gap: 4.500px; padding: 0 0 1px 5px; margin-bottom: 6px; border-bottom: 2px solid #c8c8c8; }
.tgroup:nth-child(3) { padding-top: 2px; row-gap: 2.500px; }
.tgroup:nth-child(4) { padding-top: 3px; row-gap: 3px; margin-bottom: 4.500px; }
.tgroup.last { border: 0; }
.tbi { width: 18px; height: 18px; }
.mini { font: 6px "Liberation Sans", sans-serif; fill: #111; }

.viewport { flex: 1; position: relative; background: linear-gradient(180deg, #1e2d4a 0, #24364f 25%, #2b3e5c 40%, #3f5273 62%, #6d7d99 82%, #a3afc4 100%); overflow: hidden; }
.orient { position: absolute; left: 718px; top: 14px; width: 44px; height: 60px; }
.ol { font: 700 6px "Liberation Sans", sans-serif; fill: #f0f06a; }
.part3d { position: absolute; left: 336px; top: 172px; width: 140px; height: 126px; }
.triad { position: absolute; left: 29px; top: 374px; width: 70px; height: 56px; }
.tl { font: 700 7px "DejaVu Sans", sans-serif; fill: #fff; }

.msgbar { height: 29px; flex: none; background: linear-gradient(#fff, #f4f4f4); display: flex; justify-content: flex-end; border-bottom: 1px solid #bbb; overflow: hidden; }
.logo { width: 32px; flex: none; overflow: visible; display: flex; flex-direction: column; }
.ds { width: 24px; height: 18px; margin-top: 1px; flex: none; }
.simu { font: italic 700 8.500px "Liberation Sans", sans-serif; color: #1a2a70; line-height: 7px; white-space: nowrap; margin-left: 7px; }

.cmdrow { height: 19px; flex: none; background: #f2f2f2; padding: 1px 1px 0 10px; border-top: 1px solid #ccc; }
.cmd { height: 18px; background: #fff; border: 1px solid #c8c8c8; border-bottom: 0; }

.netwidget {
  position: absolute; left: 19px; top: 577px;
  width: 71px; height: 29px;
  display: flex; align-items: center; gap: 3px;
  background: #eef0ee;
  border-radius: 15px;
  box-shadow: 0 0 3px rgba(0,0,0,.3);
  padding-left: 1px;
  font-size: 8px;
  color: #444;
}
.ring { width: 27px; height: 27px; flex: none; border-radius: 50%; background: #bfe8a8; border: 2px solid #4fa84a; font-size: 8px; line-height: 23px; text-align: center; color: #355; }
.speeds { display: flex; flex-direction: column; gap: 3px; white-space: nowrap; line-height: 9px; }
.speeds span { display: flex; justify-content: space-between; width: 35px; }
.speeds b { font-weight: 700; font-size: 11px; }
.upa { color: #d9822b; }
.dna { color: #2e8b3a; }
```
